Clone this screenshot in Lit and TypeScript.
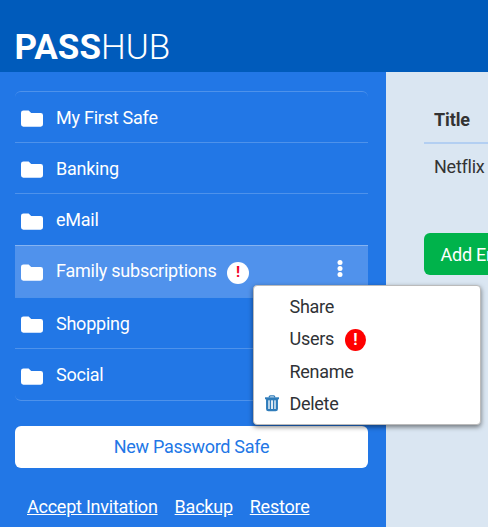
import { LitElement, html, css, svg } from "lit";
import { customElement, property } from "lit/decorators.js";
import { classMap } from "lit/directives/class-map.js";

interface Safe {
  name: string;
  alert?: boolean;
  active?: boolean;
}

const safes: Safe[] = [
  { name: "My First Safe" },
  { name: "Banking" },
  { name: "eMail" },
  { name: "Family subscriptions", alert: true, active: true },
  { name: "Shopping" },
  { name: "Social" },
];

@customElement("safe-row")
class SafeRow extends LitElement {
  @property({ attribute: false }) safe!: Safe;

  static styles = css`
    :host { display: block; height: 100%; }
    .row {
      box-sizing: border-box;
      height: 100%;
      padding: 1px 23px 0 6px;
      display: flex;
      align-items: center;
      color: #fff;
      font-size: 18px;
      line-height: 26px;
    }
    .active { background: #5092ec; padding: 0 23px 1px 6px; }
    .folder { width: 22px; height: 17px; margin: 2px 13px 0 0; flex: none; }
    .name { white-space: nowrap; }
    .badge {
      width: 22px; height: 22px; margin: 3px 0 0 10.5px;
      border-radius: 50%;
      background: #fff; color: #f00026;
      font-weight: 700; font-size: 15px; line-height: 21px; text-align: center;
      letter-spacing: 0;
    }
    .dots { width: 6px; height: 17px; margin: -5px 2px 0 auto; }
  `;

  render() {
    const s = this.safe;
    return html`<div class=${classMap({ row: true, active: !!s.active })}>
      <svg class="folder" viewBox="0 0 22 17" fill="#fff">
        <path d="M2.5 0.5H7.6L10.2 3H19.7Q22 3 22 5.3V14.3Q22 16.7 19.7 16.7H2.4Q0 16.7 0 14.3V2.8Q0 0.5 2.5 0.5Z" />
      </svg>
      <span class="name">${s.name}</span>
      ${s.alert ? html`<span class="badge">!</span>` : ""}
      ${s.active
        ? html`<svg class="dots" viewBox="0 0 6 17" fill="#fff">
            ${[2.6, 8.5, 14.4].map((y) => svg`<circle cx="3" cy=${y} r="2.5" />`)}
          </svg>`
        : ""}
    </div>`;
  }
}

@customElement("safe-menu")
class SafeMenu extends LitElement {
  static styles = css`
    :host {
      display: block;
      box-sizing: border-box;
      width: 228px; height: 140px;
      padding: 4px 0;
      background: #fff;
      border: 1px solid #bbb;
      border-radius: 4px;
      box-shadow: 0 2px 5px rgba(0, 0, 0, 0.5);
    }
    .item {
      display: grid;
      grid-template-columns: 35.6px auto auto 1fr;
      align-items: center;
      height: 32.5px;
      color: #2f3236;
      font-size: 18px;
      letter-spacing: -0.32px;
    }
    .label { grid-column: 2; }
    .trash { width: 14px; height: 17px; margin-left: 11px; }
    .badge {
      width: 21px; height: 22px; margin: 3px 0 0 11px;
      border-radius: 50%;
      background: #f00; color: #fff;
      font-weight: 700; font-size: 16px; line-height: 21px; text-align: center;
      letter-spacing: 0;
    }
  `;

  render() {
    return html`
      <div class="item"><span class="label">Share</span></div>
      <div class="item"><span class="label">Users</span><span class="badge">!</span></div>
      <div class="item"><span class="label">Rename</span></div>
      <div class="item">
        <svg class="trash" viewBox="0 0 14 17" fill="none" stroke="#2f7cba">
          <path d="M4.3 2.5V2Q4.3 0.9 5.4 0.9H8.6Q9.7 0.9 9.7 2V2.5" stroke-width="1.3" />
          <path d="M0 3.3H14" stroke-width="2" />
          <path d="M2.2 4V14Q2.2 15.2 3.4 15.2H10.6Q11.8 15.2 11.8 14V4" stroke-width="2.3" />
          <path d="M3 4.6H11" stroke-width="1.4" />
          <path d="M5.4 5V14.5M8.6 5V14.5" stroke-width="1.5" />
        </svg>
        <span class="label">Delete</span>
      </div>
    `;
  }
}

@customElement("app-root")
class AppRoot extends LitElement {
  static styles = css`
    :host {
      display: flex;
      flex-direction: column;
      position: relative;
      height: 527px;
      overflow: hidden;
      font-family: Roboto, sans-serif;
      font-size: 18px;
      letter-spacing: -0.24px;
      background: #dae6f2;
    }
    header {
      box-sizing: border-box;
      height: 72px;
      flex: none;
      padding: 27px 0 0 14.6px;
      background: #005bbb;
      color: #fff;
      font-size: 35px;
      line-height: 42px;
      letter-spacing: 0;
      white-space: nowrap;
    }
    .strong { font-weight: 700; }
    .thin { font-weight: 300; }
    main { display: flex; flex: 1; min-height: 0; }
    aside {
      box-sizing: border-box;
      width: 386px;
      flex: none;
      padding: 19px 18px 0 15px;
      background: #2277e6;
    }
    .list {
      box-sizing: border-box;
      height: 310px;
      display: grid;
      grid-template-rows: 51px 51px 52px 52px 51px 51px;
      border: 1px solid #4e92eb;
      border-width: 1px 0;
      border-radius: 6px;
    }
    .cell { box-sizing: border-box; border-bottom: 1px solid #4e92eb; }
    .cell:last-child { border-bottom: 0; }
    .before { border-bottom-color: #85b3f1; }
    .create {
      height: 42px;
      margin-top: 25px;
      border-radius: 6px;
      background: #fff;
      color: #2277e6;
      line-height: 42px;
      text-align: center;
      letter-spacing: -0.3px;
    }
    .links { display: flex; gap: 17px; padding: 27px 0 0 12px; line-height: 24px; }
    .links a { color: #fff; text-decoration: underline; white-space: nowrap; }
    section { flex: 1; min-width: 0; padding: 25px 0 0 38px; color: #333; }
    .title {
      height: 45px; padding-left: 10px;
      border-bottom: 2px solid #b3cff2;
      font-weight: 700; line-height: 46px;
      letter-spacing: -0.1px;
    }
    .entry { height: 48px; padding-left: 10px; line-height: 46px; }
    .add {
      height: 42px;
      margin-top: 41px;
      padding-left: 16.5px;
      border-radius: 6px 0 0 6px;
      background: #00b34b;
      color: #fff;
      line-height: 43px;
      white-space: nowrap;
      overflow: hidden;
    }
    .popup { position: absolute; left: 253px; top: 285px; }
  `;

  render() {
    return html`
      <header><span class="strong">PASS</span><span class="thin">HUB</span></header>
      <main>
        <aside>
          <div class="list">
            ${safes.map(
              (s, i) => html`<div class=${classMap({ cell: true, before: !!safes[i + 1]?.active })}>
                <safe-row .safe=${s}></safe-row>
              </div>`
            )}
          </div>
          <div class="create">New Password Safe</div>
          <nav class="links"><a>Accept Invitation</a><a>Backup</a><a>Restore</a></nav>
        </aside>
        <section>
          <div class="title">Title</div>
          <div class="entry">Netflix</div>
          <div class="add">Add Entry</div>
        </section>
      </main>
      <safe-menu class="popup"></safe-menu>
    `;
  }
}
